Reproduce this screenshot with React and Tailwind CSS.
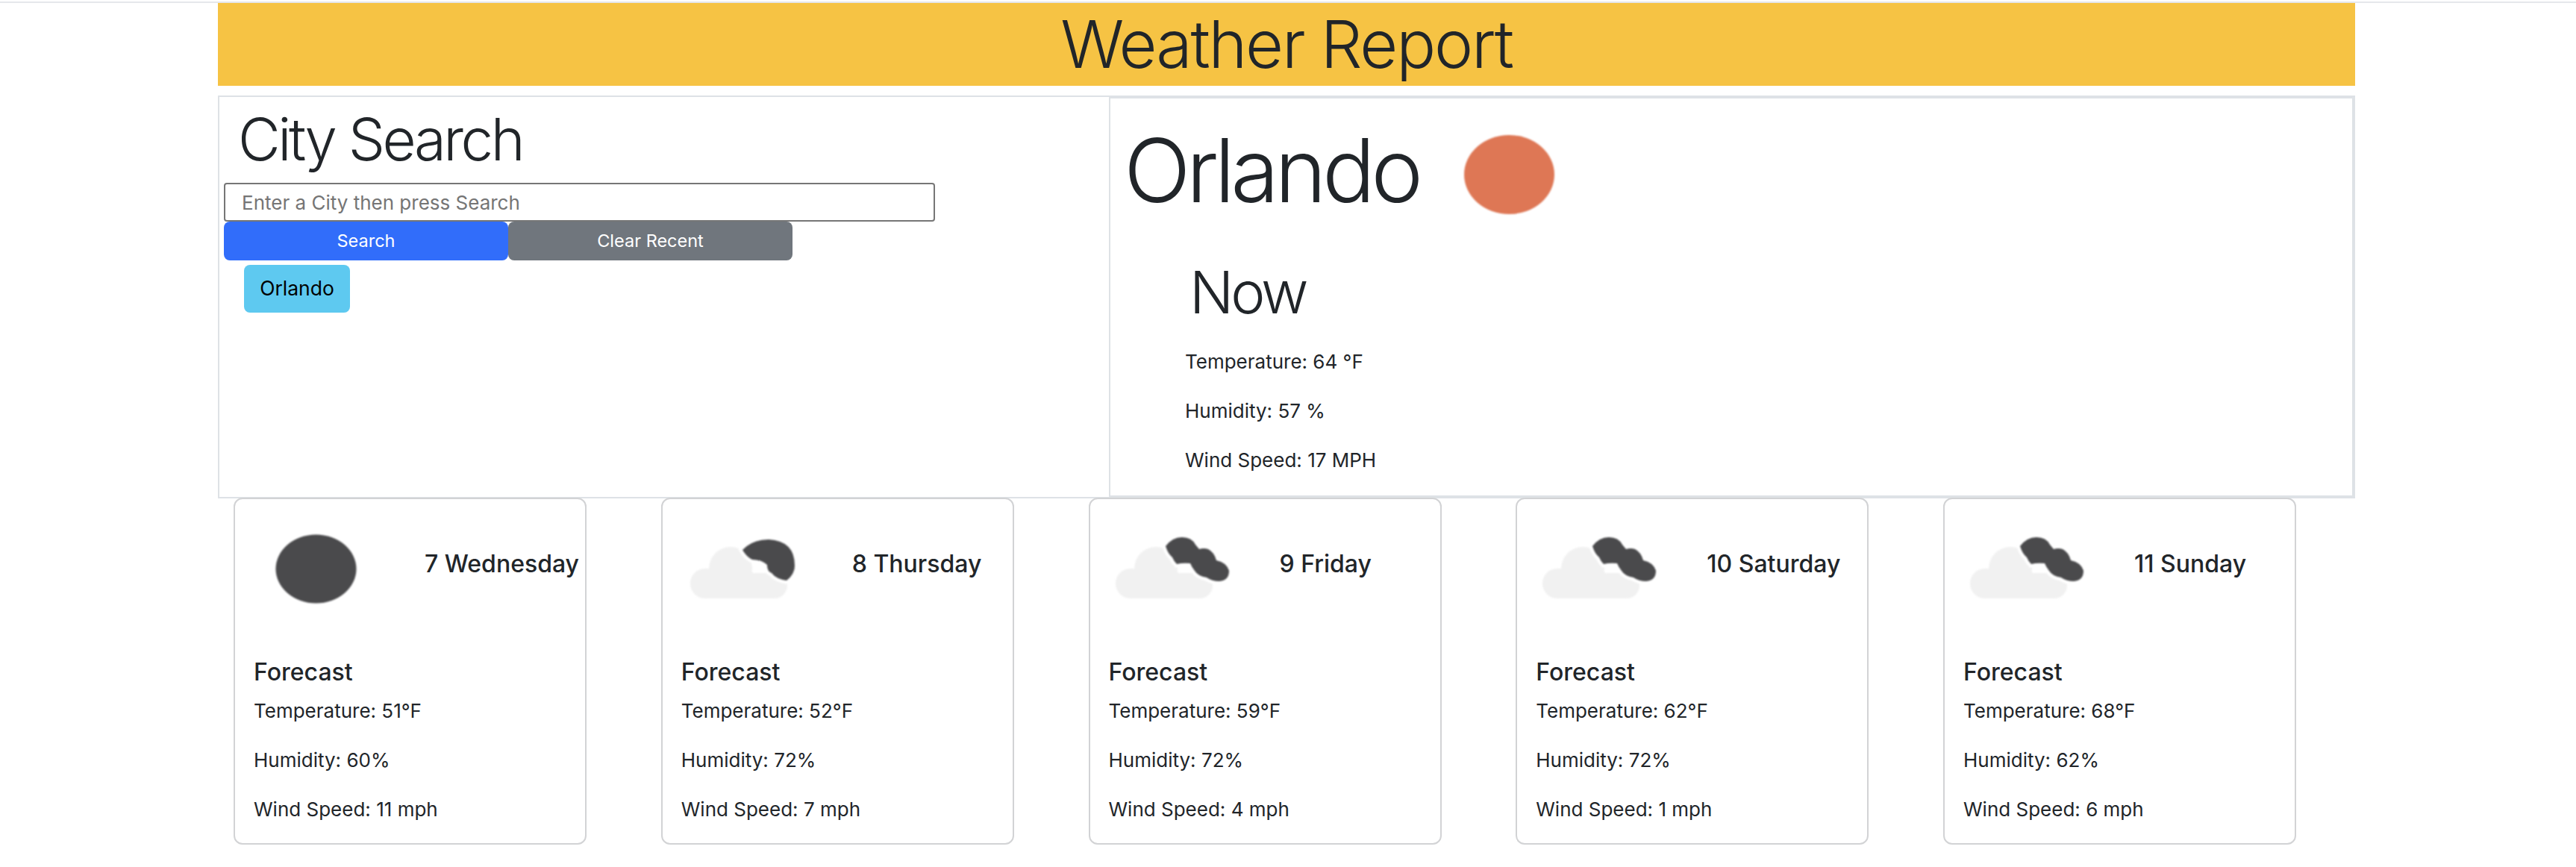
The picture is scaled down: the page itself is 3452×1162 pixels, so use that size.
const FONT = "font-['Inter','Helvetica_Neue','Liberation_Sans',sans-serif]";

const forecast = [
  { day: "7 Wednesday", temp: 51, humidity: 60, wind: 11, icon: "clear" },
  { day: "8 Thursday", temp: 52, humidity: 72, wind: 7, icon: "few" },
  { day: "9 Friday", temp: 59, humidity: 72, wind: 4, icon: "scattered" },
  { day: "10 Saturday", temp: 62, humidity: 72, wind: 1, icon: "scattered" },
  { day: "11 Sunday", temp: 68, humidity: 62, wind: 6, icon: "scattered" },
];

const FEW_PATH =
  "M79 27 Q92 13 114 13 Q149 15 149 48 Q149 60 138 68 Q124 66 118 58 Q112 56 112 47 Q104 40 92 40 Q84 36 79 27Z";
const SCATTERED_PATH =
  "M73 22 Q82 10 95 10 Q108 10 113 20 L118 26 Q124 24 130 26 Q138 30 141 41 Q155 44 158 55 Q158 68 145 69 Q135 69 128 64 Q116 62 112 55 Q108 50 106 45 Q96 44 88 46 Q84 42 82 37 Q76 32 73 22Z";

function Cloud({ dx = 0, dark }) {
  return (
    <>
      <g fill="#f1f1f1" transform={`translate(${dx} 0)`}>
        <rect x="6" y="52" width="90" height="40" rx="20" />
        <rect x="60" y="58" width="76" height="34" rx="17" />
        <circle cx="60" cy="52" r="29" />
      </g>
      {/* white halo between the cloud and the dark one behind it */}
      <path d={dark} fill="#fff" stroke="#fff" strokeWidth="9" />
      <path d={dark} fill="#4a4a4c" />
    </>
  );
}

function WeatherIcon({ type }) {
  return (
    <svg viewBox="0 0 190 105" className="w-[190px] h-[105px] shrink-0 blur-[0.8px]">
      {type === "clear" && <ellipse cx="80.5" cy="52.5" rx="54" ry="46" fill="#4a4a4c" />}
      {type === "few" && <Cloud dx={3} dark={FEW_PATH} />}
      {type === "scattered" && <Cloud dark={SCATTERED_PATH} />}
    </svg>
  );
}

function ForecastCard({ item }) {
  return (
    <div className="w-[473px] h-[465px] shrink-0 border-2 border-[#d2d3d5] rounded-[12px] bg-white">
      <div className="flex pt-[41px] pl-[28px]">
        <WeatherIcon type={item.icon} />
        <div className="ml-[36px] mt-[26px] text-[32px] leading-[40px] font-medium whitespace-nowrap">{item.day}</div>
      </div>
      <div className="pl-[25px] mt-[66px]">
        <div className="text-[32px] leading-[40px] font-medium">Forecast</div>
        <p className="text-[26px] leading-[32px] mt-[16px]">Temperature: {item.temp}°F</p>
        <p className="text-[26px] leading-[32px] mt-[34px]">Humidity: {item.humidity}%</p>
        <p className="text-[26px] leading-[32px] mt-[34px]">Wind Speed: {item.wind} mph</p>
      </div>
    </div>
  );
}

export default function App() {
  return (
    <div className={`${FONT} min-h-screen bg-white text-[#212529]`}>
      <div className="h-[4px] border-t-2 border-b-2 border-t-white border-b-[#e5e7eb]" />
      <div className="ml-[292px] w-[2864px]">
        <header className="h-[111px] bg-[#f6c344] text-center">
          <h1 className="text-[88px] leading-[110px] font-light tracking-[-2.2px]">Weather Report</h1>
        </header>

        <div className="flex h-[540px] mt-[13px]">
          <section className="w-[1194px] border-2 border-r-0 border-[#dee2e6] pl-[6px]">
            <h2 className="text-[78px] leading-[94px] font-light tracking-[-3.5px] pl-[19px] mt-[10px]">City Search</h2>
            <input
              placeholder="Enter a City then press Search"
              className="block w-[953px] h-[52px] mt-[11px] px-[22px] border-2 border-[#767676] rounded-[4px] text-[26px] outline-none placeholder:text-[#757575]"
            />
            <div className="flex">
              <button className="w-[381px] h-[52px] bg-[#316dfa] text-white text-[23.5px] rounded-[8px]">Search</button>
              <button className="w-[381px] h-[52px] bg-[#70767d] text-white text-[23.5px] rounded-[8px]">Clear Recent</button>
            </div>
            <button className="block ml-[27px] mt-[6px] w-[142px] h-[64px] bg-[#5ec9f0] text-black text-[26.5px] rounded-[8px]">
              Orlando
            </button>
          </section>

          <section className="flex-1 border-t-4 border-r-4 border-b-4 border-l-2 border-[#dee2e6]">
            <div className="flex pl-[18px] pt-[26px]">
              <h2 className="text-[118px] leading-[140px] font-light tracking-[-5.8px]">Orlando</h2>
              <svg viewBox="0 0 123 108" className="w-[123px] h-[108px] ml-[60px] mt-[22px] blur-[0.8px]">
                <ellipse cx="61.5" cy="54" rx="60.5" ry="53" fill="#de7755" />
              </svg>
            </div>
            <div className="pl-[100px] mt-[47px]">
              <h3 className="text-[78px] leading-[94px] font-light tracking-[-4px] pl-[6px]">Now</h3>
              <p className="text-[26px] leading-[32px] mt-[30px]">Temperature: 64 °F</p>
              <p className="text-[26px] leading-[32px] mt-[34px]">Humidity: 57 %</p>
              <p className="text-[26px] leading-[32px] mt-[34px]">Wind Speed: 17 MPH</p>
            </div>
          </section>
        </div>

        <div className="flex gap-[99.75px] pl-[21px] mt-[-1px]">
          {forecast.map((item) => (
            <ForecastCard key={item.day} item={item} />
          ))}
        </div>
      </div>
    </div>
  );
}
